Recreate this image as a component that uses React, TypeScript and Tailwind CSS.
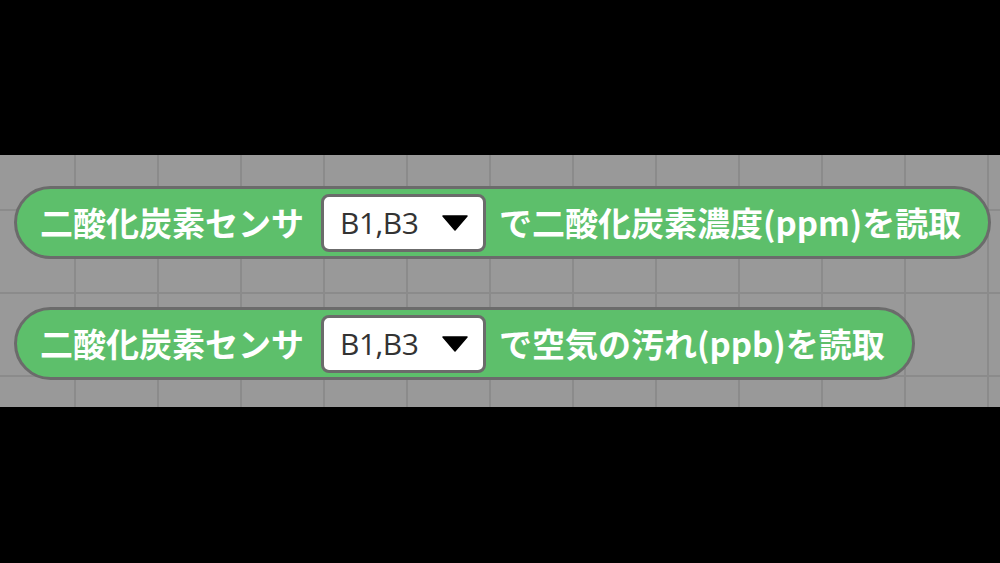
type BlockProps = {
  label: string;
  port: string;
  action: string;
};

const SensorBlock = ({ label, port, action }: BlockProps) => {
  return (
    <div className="flex h-[73px] w-fit items-center rounded-full border-[3px] border-[#6b6b6b] bg-[#5dbf6b] pl-[23px] pr-[27px]">
      <span className="text-[33px] font-bold leading-none text-white">{label}</span>
      <div className="ml-[17px] flex h-[58px] w-[165px] items-center justify-between rounded-[8px] border-[3px] border-[#6b6b6b] bg-white pl-[16px] pr-[14px]">
        <span className="font-['Open_Sans','Noto_Sans_CJK_JP',sans-serif] text-[30px] font-medium leading-none tracking-[-0.5px] text-[#333]">
          {port}
        </span>
        {/* dropdown caret */}
        <svg width="26" height="16" viewBox="0 0 26 16" className="mr-[1px]">
          <path d="M1 1 H25 L13 15 Z" fill="#000" stroke="#000" strokeWidth="1.5" strokeLinejoin="round" />
        </svg>
      </div>
      <span className="ml-[13px] text-[33px] font-bold leading-none text-white">{action}</span>
    </div>
  );
};

export default function App() {
  return (
    <div className="flex h-[563px] w-[1000px] flex-col bg-black font-['Noto_Sans_CJK_JP','Noto_Sans',sans-serif]">
      <div className="h-[155px]" />
      <div className="flex h-[252px] flex-col gap-[48px] bg-[#999999] bg-[linear-gradient(to_right,#8b8b8b_2px,transparent_2px),linear-gradient(to_bottom,#8b8b8b_2px,transparent_2px)] bg-[size:83px_83px] bg-[position:74px_54px] pl-[14px] pt-[31px]">
        <SensorBlock label="二酸化炭素センサ" port="B1,B3" action="で二酸化炭素濃度(ppm)を読取" />
        <SensorBlock label="二酸化炭素センサ" port="B1,B3" action="で空気の汚れ(ppb)を読取" />
      </div>
    </div>
  );
}
